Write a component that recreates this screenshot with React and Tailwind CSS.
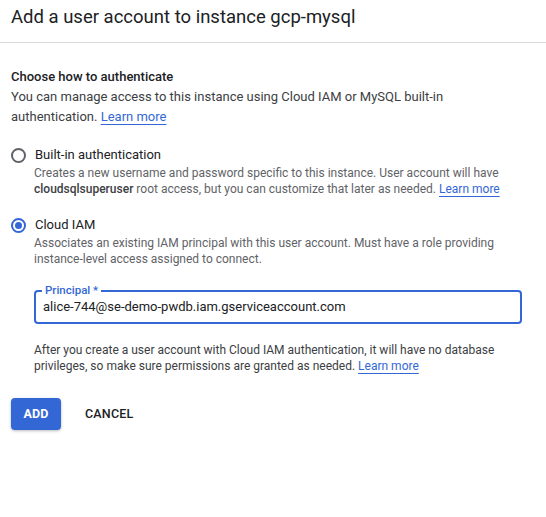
import { useState } from 'react';

function Radio({ checked, onClick }) {
    return (
        <button
            type="button"
            onClick={onClick}
            className={`w-[15px] h-[15px] rounded-full border-2 flex items-center justify-center shrink-0 ${checked ? 'border-[#3367d6]' : 'border-[#5f6368]'}`}
        >
            {checked && <span className="w-[7px] h-[7px] rounded-full bg-[#3367d6]" />}
        </button>
    );
}

function LearnMore() {
    return (
        <a href="#" className="text-[#3367d6] underline underline-offset-[3px] decoration-[#3367d6]">
            Learn more
        </a>
    );
}

export default function App() {
    const [method, setMethod] = useState('iam');
    const [principal, setPrincipal] = useState('alice-744@se-demo-pwdb.iam.gserviceaccount.com');

    return (
        <div className="w-[546px] h-[517px] bg-white text-[#202124] font-['Roboto',sans-serif]">
            <div className="h-[43px] border-b border-[#dadce0] px-[11px] pt-[5px]">
                <h1 className="text-[18.5px] leading-[24px] font-normal text-[#202124]">Add a user account to instance gcp-mysql</h1>
            </div>

            <div className="px-[11px] pt-[24px]">
                <h2 className="text-[13px] leading-[20px] font-medium text-[#202124]">Choose how to authenticate</h2>
                <p className="text-[13px] leading-[20px] text-[#3c4043] pr-[90px]">
                    You can manage access to this instance using Cloud IAM or MySQL built-in authentication. <LearnMore />
                </p>

                <div className="mt-[18px] flex flex-col gap-[18px]">
                    <div>
                        <label className="flex items-center gap-[8px] h-[20px] cursor-pointer" onClick={() => setMethod('builtin')}>
                            <Radio checked={method === 'builtin'} />
                            <span className="text-[13px] text-[#202124] ml-[1px]">Built-in authentication</span>
                        </label>
                        <p className="pl-[23px] text-[12px] leading-[16px] text-[#5f6368]">
                            Creates a new username and password specific to this instance. User account will have{' '}
                            <span className="font-medium text-[#3c4043]">cloudsqlsuperuser</span> root access, but you can customize that later as needed.{' '}
                            <LearnMore />
                        </p>
                    </div>

                    <div>
                        <label className="flex items-center gap-[8px] h-[20px] cursor-pointer" onClick={() => setMethod('iam')}>
                            <Radio checked={method === 'iam'} />
                            <span className="text-[13px] text-[#202124] ml-[1px]">Cloud IAM</span>
                        </label>
                        <p className="pl-[23px] text-[12px] leading-[16px] text-[#5f6368] pr-[40px]">
                            Associates an existing IAM principal with this user account. Must have a role providing instance-level access assigned to connect.
                        </p>

                        <div className="pl-[23px] mt-[23px] pr-[13px]">
                            <div className="relative h-[34px] border-2 border-[#3367d6] rounded-[4px] flex items-center px-[7px]">
                                <span className="absolute -top-[9px] left-[6px] bg-white px-[3px] text-[11.5px] leading-[14px] font-medium text-[#3367d6]">
                                    Principal *
                                </span>
                                <input
                                    value={principal}
                                    onChange={(e) => setPrincipal(e.target.value)}
                                    className="w-full outline-none text-[13px] text-[#202124] bg-transparent"
                                />
                            </div>
                        </div>

                        <p className="pl-[23px] mt-[19px] text-[12px] leading-[15.5px] text-[#3c4043] pr-[40px]">
                            After you create a user account with Cloud IAM authentication, it will have no database privileges, so make sure permissions are granted as needed. <LearnMore />
                        </p>
                    </div>
                </div>

                <div className="mt-[24px] flex items-center gap-[12px]">
                    <button className="h-[32px] w-[50px] rounded-[4px] bg-[#3367d6] text-white text-[12.5px] font-bold tracking-[0.2px] shadow-[0_1px_3px_rgba(60,64,67,0.35)]">
                        ADD
                    </button>
                    <button className="h-[32px] px-[12px] text-[12.5px] font-medium text-[#202124] tracking-[0.2px]">
                        CANCEL
                    </button>
                </div>
            </div>
        </div>
    );
}
